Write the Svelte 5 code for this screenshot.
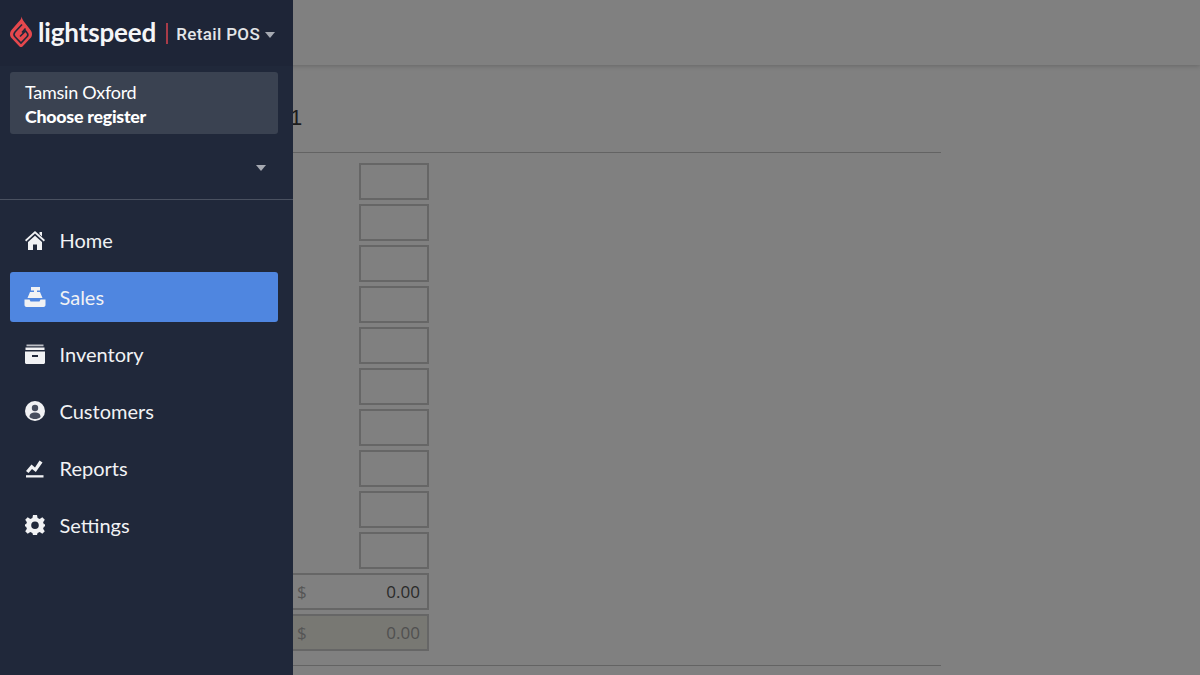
<script>
	const nav = [
		{ label: 'Home', icon: 'home' },
		{ label: 'Sales', icon: 'sales', active: true },
		{ label: 'Inventory', icon: 'inventory' },
		{ label: 'Customers', icon: 'customers' },
		{ label: 'Reports', icon: 'reports' },
		{ label: 'Settings', icon: 'settings' }
	];
	const blanks = Array(10).fill(0);
</script>

<div class="page">
	<header class="topbar"></header>

	<main class="content">
		<h2 class="title">1</h2>
		<div class="rows">
			{#each blanks as _}
				<div class="cell"></div>
			{/each}
			<div class="cell wide"><span class="cur">$</span><span class="amt">0.00</span></div>
			<div class="cell wide readonly"><span class="cur">$</span><span class="amt">0.00</span></div>
		</div>
		<div class="rule"></div>
	</main>

	<aside class="drawer">
		<div class="brand">
			<svg class="flame" viewBox="0 0 22 32" width="22" height="32">
				<path d="M11.500 .5 C12 3 13.500 5 15 7 L20.500 14 C22.500 16.500 22.500 20 20.500 22 L12.500 30.500 C11.700 31.300 10.300 31.300 9.500 30.500 L1.500 22 C-.5 20 -.5 16.500 1.500 14 L8 6.500 C10 4.500 11.500 3 11.500 .5 Z" fill="#e5484d"/>
				<path d="M12 8.500 L5 16 C3.800 17.400 3.800 19.400 5 20.800 L11 27 L17 20.800 C18 19.800 18 18 17 16.800 L15.600 15 L10 20.500 M12 16.500 L15.500 12.500" fill="none" stroke="#20283a" stroke-width="1.600"/>
			</svg>
			<span class="wordmark">lightspeed</span>
			<span class="sep"></span>
			<span class="product">Retail POS</span>
			<span class="caret"></span>
		</div>

		<div class="user">
			<div class="name">Tamsin Oxford</div>
			<div class="register">Choose register</div>
		</div>

		<div class="picker"><span class="caret"></span></div>

		<nav>
			{#each nav as item}
				<div class="item" class:active={item.active}>
					<svg class="icon" viewBox="0 0 22 22" width="22" height="22">
						{#if item.icon === 'home'}
							<path d="M1 11 L11 2 L21 11 L19.800 12.400 L11 4.600 L2.200 12.400 Z" fill="currentColor"/>
							<path d="M15.500 3 H18 V7.500 L15.500 5.300 Z" fill="currentColor"/>
							<path d="M4 13 L11 6.800 L18 13 V21 H13 V15.500 H9 V21 H4 Z" fill="currentColor"/>
						{:else if item.icon === 'sales'}
							<path d="M7 1 H16 V4.500 H13 V6 H16 L18.500 12 H3.500 L6 6 H10 V4.500 H7 Z" fill="currentColor"/>
							<path d="M.5 13.500 H5.500 L6.500 15.500 H15.500 L16.500 13.500 H21.500 V19 C21.500 20 20.500 21 19.500 21 H2.500 C1.500 21 .5 20 .5 19 Z" fill="currentColor"/>
						{:else if item.icon === 'inventory'}
							<rect x="2.500" y="1.500" width="17" height="1.800" fill="currentColor" opacity="0.75"/>
							<rect x="1.500" y="4.500" width="19" height="2.500" fill="currentColor"/>
							<path d="M1 8.500 H21 V19.500 C21 20.300 20.300 21 19.500 21 H2.500 C1.700 21 1 20.300 1 19.500 Z M8 12 V14 H14 V12 Z" fill="currentColor" fill-rule="evenodd"/>
						{:else if item.icon === 'customers'}
							<circle cx="11" cy="11" r="10" fill="currentColor"/>
							<circle cx="11" cy="8" r="3.200" fill="#474e5e"/>
							<path d="M5.500 17 C5.500 13.500 8 12.500 11 12.500 C14 12.500 16.500 13.500 16.500 17 C15 18.500 13 19 11 19 C9 19 7 18.500 5.500 17 Z" fill="#474e5e"/>
						{:else if item.icon === 'reports'}
							<path d="M2 14 L7.500 7.500 L11 10.500 L15.500 3.500 L18.500 5.500 L11.800 15 L8 12 L4.500 16 Z" fill="currentColor"/>
							<rect x="2" y="18.200" width="17.500" height="2.300" fill="currentColor"/>
						{:else}
							<path d="M9 1 H13 L13.600 4 L15.700 4.900 L18.300 3.200 L20.800 5.700 L19.100 8.300 L20 10.400 L21 10 V12.500 L20 12.600 L19.100 14.700 L20.800 17.300 L18.300 19.800 L15.700 18.100 L13.600 19 L13 21 H9 L8.400 19 L6.300 18.100 L3.700 19.800 L1.200 17.300 L2.900 14.700 L2 12.600 L1 12.500 V10 L2 10.400 L2.900 8.300 L1.200 5.700 L3.700 3.200 L6.300 4.900 L8.400 4 Z M11 7.500 A3.800 3.800 0 1 0 11 15.100 A3.800 3.800 0 1 0 11 7.500 Z" fill="currentColor" fill-rule="evenodd"/>
						{/if}
					</svg>
					<span>{item.label}</span>
				</div>
			{/each}
		</nav>
	</aside>
</div>

<style>
	:global(body) {
		margin: 0;
		background: #808080;
	}

	.page {
		position: relative;
		width: 1200px;
		height: 675px;
		overflow: hidden;
		background: #808080;
		font-family: Lato, sans-serif;
	}

	.topbar {
		height: 65px;
		background: #808080;
		box-shadow: 0 1px 5px rgba(0, 0, 0, 0.2);
	}

	.content {
		width: 941px;
		box-sizing: border-box;
		padding-left: 200px;
	}

	.title {
		margin: 0;
		height: 88px;
		box-sizing: border-box;
		padding: 39px 0 0 90px;
		border-bottom: 1px solid #636363;
		font: 400 22px/28px "Liberation Sans", sans-serif;
		color: #1c1c1c;
	}

	.rows {
		display: flex;
		flex-direction: column;
		gap: 4px;
		width: 229px;
		padding-top: 10px;
		padding-bottom: 14px;
		align-items: flex-end;
	}

	.rule {
		border-top: 1px solid #636363;
	}

	.cell {
		width: 70px;
		height: 37px;
		box-sizing: border-box;
		border: 2px solid #666;
	}

	.cell.wide {
		width: 229px;
		display: flex;
		align-items: center;
		justify-content: space-between;
		padding: 0 7px 0 95px;
		font: 400 17px "Open Sans", sans-serif;
		color: #2a2a2a;
	}

	.cur {
		color: #555;
	}

	.readonly {
		background: #787873;
	}

	.readonly .amt {
		color: #505050;
	}

	.drawer {
		position: absolute;
		left: 0;
		top: 0;
		bottom: 0;
		width: 293px;
		background: #20283a;
		color: #fff;
		display: flex;
		flex-direction: column;
	}

	.brand {
		height: 66px;
		flex: none;
		display: flex;
		align-items: center;
		padding-left: 10px;
		box-sizing: border-box;
		background: #1e2537;
	}

	.flame {
		flex: none;
		margin-top: -3px;
	}

	.wordmark {
		font: 700 26px/1 Lato, sans-serif;
		margin: -2px 0 0 6px;
		letter-spacing: -0.15px;
		color: #f5f6f7;
	}

	.sep {
		width: 2px;
		height: 21px;
		margin: 0 8px 0 10px;
		background: #a83b48;
	}

	.product {
		font: 500 17px/1 Roboto, sans-serif;
		letter-spacing: 0.35px;
		color: #e3e5e8;
		margin-top: 2px;
	}

	.caret {
		width: 0;
		height: 0;
		border-left: 5px solid transparent;
		border-right: 5px solid transparent;
		border-top: 6px solid #a6aab2;
	}

	.brand .caret {
		margin: 3px 0 0 5px;
	}

	.user {
		margin: 6px 15px 0 10px;
		height: 62px;
		box-sizing: border-box;
		padding: 8px 15px;
		border-radius: 3px;
		background: #3a4251;
		font-size: 18px;
		line-height: 24px;
		letter-spacing: -0.25px;
	}

	.register {
		font-weight: 900;
		font-size: 17.800px;
		line-height: 24px;
	}

	.picker {
		height: 66px;
		box-sizing: border-box;
		display: flex;
		justify-content: flex-end;
		align-items: center;
		padding: 2px 27px 0 0;
		border-bottom: 1px solid #4a5160;
	}

	nav {
		display: flex;
		flex-direction: column;
		gap: 7px;
		padding: 15px 15px 0 10px;
	}

	.item {
		height: 50px;
		display: flex;
		align-items: center;
		gap: 13.500px;
		padding-left: 14px;
		border-radius: 3px;
		font-size: 20px;
		color: #f1f2f4;
	}

	.item.active {
		background: #4f86e0;
	}

	.icon {
		flex: none;
	}
</style>
